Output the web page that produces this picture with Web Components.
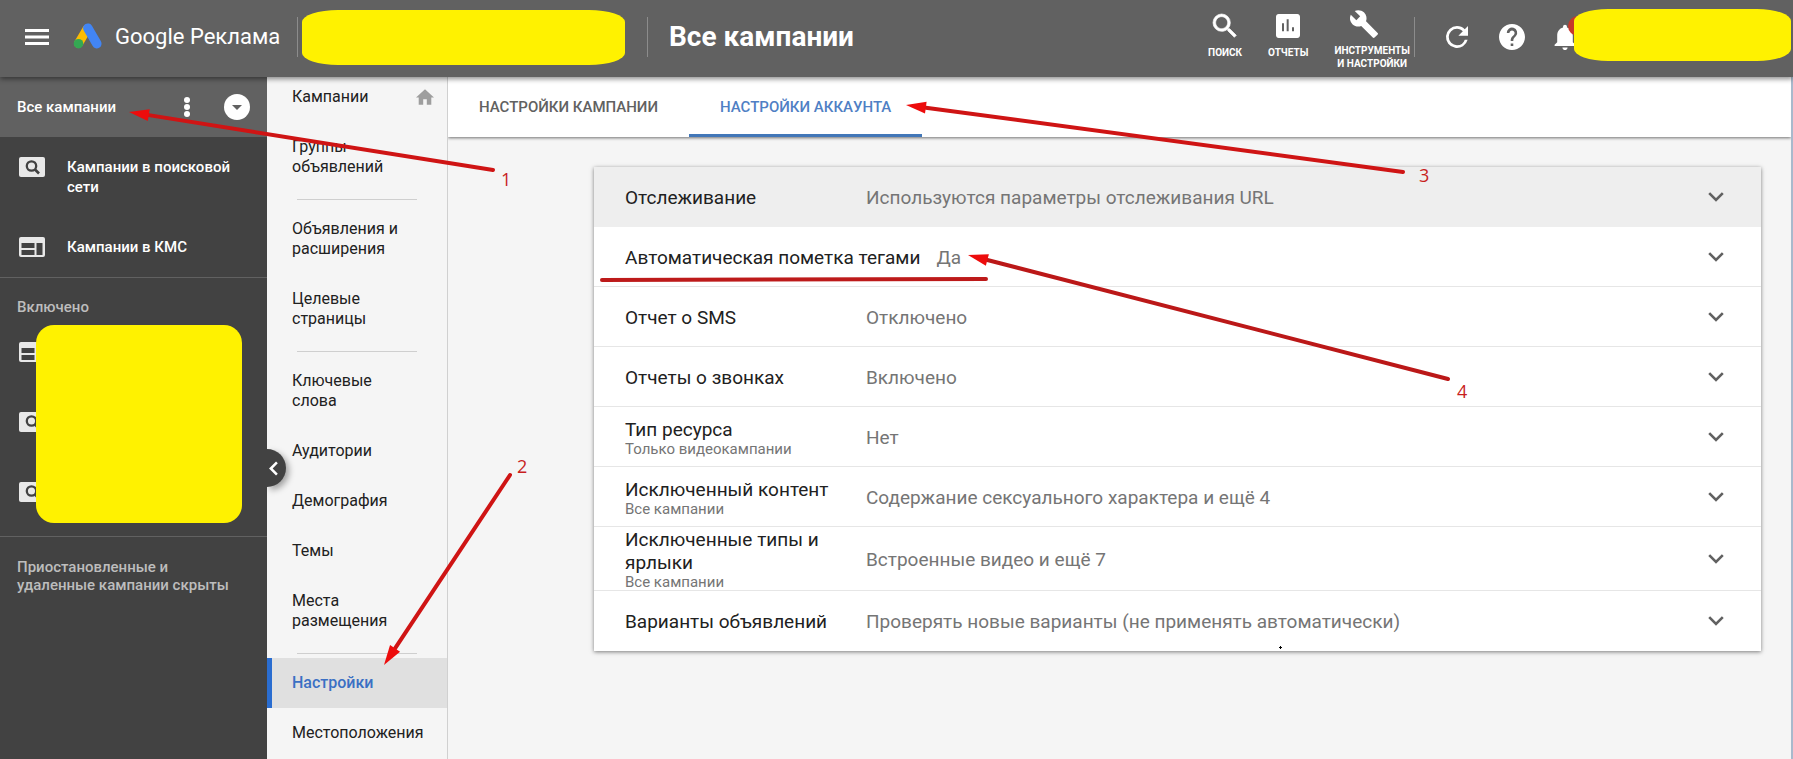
<!DOCTYPE html>
<html lang="ru">
<head>
<meta charset="utf-8">
<title>Все кампании – Google Реклама</title>
<style>
html, body { margin: 0; height: 100%; }
body { font-family: Roboto, "Noto Sans", sans-serif; background: #f5f5f5; overflow: hidden; }
</style>
</head>
<body>
<ads-app></ads-app>
<script>
const ICONS = {
  menu: '<svg viewBox="0 0 24 16"><path fill="currentColor" d="M0 0h24v3H0zM0 6.500h24v3H0zM0 13h24v3H0z"/></svg>',
  logo: '<svg viewBox="0 0 30 26"><path d="M5.500 20.500 14 6" stroke="#fbbc04" stroke-width="9" stroke-linecap="round"/><path d="m14.800 5.200 9 15.500" stroke="#4285f4" stroke-width="9.500" stroke-linecap="round"/><circle cx="5.500" cy="20.700" r="4.800" fill="#34a853"/></svg>',
  search: '<svg viewBox="3 3 18 18"><path fill="currentColor" stroke="currentColor" stroke-width=".5" d="M15.500 14h-.79l-.28-.27A6.470 6.470 0 0 0 16 9.500 6.500 6.500 0 1 0 9.500 16c1.610 0 3.090-.59 4.230-1.570l.27.28v.79l5 4.990L20.490 19l-4.990-5zm-6 0C7.010 14 5 11.990 5 9.500S7.010 5 9.500 5 14 7.010 14 9.500 11.990 14 9.500 14z"/></svg>',
  reports: '<svg viewBox="3 3 18 18"><path fill="currentColor" d="M19 3H5c-1.100 0-2 .9-2 2v14c0 1.100.9 2 2 2h14c1.100 0 2-.9 2-2V5c0-1.100-.9-2-2-2zM9 16H7.500v-6H9zm3.500 0H11V7h1.500zm4 0H15v-3h1.500z"/></svg>',
  wrench: '<svg viewBox="1 1 22 22"><path fill="currentColor" d="m22.700 19-9.100-9.100c.9-2.300.4-5-1.500-6.900-2-2-5-2.400-7.400-1.300L9 6 6 9 1.600 4.700C.4 7.100.9 10.100 2.900 12.100c1.900 1.900 4.600 2.400 6.900 1.500l9.100 9.100c.4.4 1 .4 1.400 0l2.300-2.300c.5-.4.5-1.100.1-1.400z"/></svg>',
  refresh: '<svg viewBox="4 4 16 16"><path fill="currentColor" d="M17.650 6.350A7.958 7.958 0 0 0 12 4a8 8 0 1 0 7.730 10h-2.080A5.990 5.990 0 0 1 12 18a6 6 0 1 1 0-12c1.660 0 3.140.69 4.220 1.780L13 11h7V4l-2.350 2.350z"/></svg>',
  help: '<svg viewBox="2 2 20 20"><path fill="currentColor" d="M12 2C6.480 2 2 6.480 2 12s4.480 10 10 10 10-4.480 10-10S17.520 2 12 2zm1 17h-2v-2h2v2zm2.070-7.750-.9.920C13.450 12.900 13 13.500 13 15h-2v-.5c0-1.100.45-2.100 1.170-2.830l1.240-1.260A2 2 0 1 0 10 9H8a4 4 0 1 1 7.070 2.250z"/></svg>',
  bell: '<svg viewBox="4 2 16 20"><path fill="currentColor" d="M12 22c1.100 0 2-.9 2-2h-4c0 1.100.9 2 2 2zm6-6v-5c0-3.070-1.640-5.640-4.500-6.320V4a1.500 1.500 0 0 0-3 0v.68C7.630 5.360 6 7.920 6 11v5l-2 2v1h16v-1l-2-2z"/></svg>',
  home: '<svg viewBox="2 3 20 17"><path fill="currentColor" d="M10 20v-6h4v6h5v-8h3L12 3 2 12h3v8z"/></svg>',
  dots: '<svg viewBox="0 0 6 20"><g fill="currentColor"><circle cx="3" cy="3" r="3"/><circle cx="3" cy="10" r="3"/><circle cx="3" cy="17" r="3"/></g></svg>',
  caret: '<svg viewBox="0 0 10 5"><path fill="currentColor" d="M0 0h10L5 5z"/></svg>',
  chevron: '<svg viewBox="0 0 16 10"><path fill="none" stroke="currentColor" stroke-width="2.600" d="m1.200 1.200 6.800 6.800 6.800-6.800"/></svg>',
  left: '<svg viewBox="0 0 10 16"><path fill="none" stroke="currentColor" stroke-width="2.800" d="m8.800 1.200-6.800 6.800 6.800 6.800"/></svg>',
  searchCard: '<svg viewBox="0 0 26 20"><rect width="26" height="20" rx="2" fill="#e8e8e8"/><circle cx="12.500" cy="9" r="4.700" fill="none" stroke="#424242" stroke-width="2.300"/><path d="m16 12.500 4 4" stroke="#424242" stroke-width="2.600"/></svg>',
  displayCard: '<svg viewBox="0 0 26 20"><rect width="26" height="20" rx="2" fill="#e8e8e8"/><path fill="#424242" d="M2.500 6h13v5h-13zM2.500 13h13v5h-13zM17.500 6h6v12h-6z"/></svg>'
};

class Base extends HTMLElement {
  constructor() { super(); this.attachShadow({ mode: 'open' }); }
  connectedCallback() { this.shadowRoot.innerHTML = this.render(); }
  a(name) { return this.getAttribute(name) || ''; }
}
const RESET = `*{box-sizing:border-box}
button{all:unset;box-sizing:border-box;cursor:pointer}
a{color:inherit;text-decoration:none}`;

customElements.define('ads-icon', class extends Base {
  render() { return `<style>:host{display:block;flex:none}svg{display:block;width:100%;height:100%;overflow:visible}</style>${ICONS[this.a('name')]}`; }
});

customElements.define('tool-button', class extends Base {
  render() { return `<style>${RESET}
:host{display:block;flex:none}
button{display:flex;flex-direction:column;align-items:center;gap:8px;text-align:center;font-size:10px;line-height:13px;font-weight:700;text-transform:uppercase;white-space:nowrap}
ads-icon{width:24px;height:24px}
:host([name=wrench]) ads-icon{width:28px;height:28px;margin-right:16px}
:host([name=wrench]) button{gap:6px}
</style><button><ads-icon name="${this.a('name')}"></ads-icon><span><slot></slot></span></button>`; }
});

customElements.define('redacted-block', class extends Base {
  render() { return `<style>:host{display:block;background:#fff200}</style>`; }
});

customElements.define('app-header', class extends Base {
  render() { return `<style>${RESET}
:host{display:flex;align-items:flex-start;height:77px;background:#616161;color:#fff;position:relative;z-index:2;box-shadow:0 2px 5px rgba(0,0,0,.45);padding-left:25px}
.menu{margin-top:29px}.menu ads-icon{width:24px;height:16px}
.brand{display:flex;gap:12px;margin:20px 0 0 24px;width:224px}
.brand ads-icon{width:30px;height:26px;margin-top:3px}
.brand span{font-size:22px;line-height:34px;white-space:nowrap}
i{flex:none;width:1px;height:40px;margin-top:17px;background:#8c8c8c}
.account{width:323px;height:55px;margin:10px 22px 0 4px;border-radius:36px / 12px}
h1{margin:18px auto 0 21px;font-size:28px;line-height:38px;font-weight:700;white-space:nowrap}
.tools{display:flex;gap:26px;padding-right:4px}
.tools tool-button{margin-top:14px}
.tools tool-button[name=wrench]{margin-top:10px}
.actions{display:flex;align-items:center;gap:31px;margin:22px 0 0 31px;height:30px}
.r{width:22px;height:22px}.h{width:26px;height:26px}.b{width:22px;height:26px;margin-right:-2px}
.bell{position:relative;margin-left:-2px}
.bell::after{content:"";position:absolute;left:14px;top:-8px;width:20px;height:20px;border-radius:50%;background:#c5392b}
.profile{position:relative;width:217px;height:52px;margin:9px 2px 0 0;border-radius:34px / 12px}
</style>
<button class="menu" aria-label="Меню"><ads-icon name="menu"></ads-icon></button>
<a class="brand" href="#"><ads-icon name="logo"></ads-icon><span>Google Реклама</span></a><i></i>
<redacted-block class="account"></redacted-block><i></i>
<h1>Все кампании</h1>
<div class="tools"><tool-button name="search">Поиск</tool-button><tool-button name="reports">Отчеты</tool-button><tool-button name="wrench">Инструменты<br>и настройки</tool-button></div><i></i>
<div class="actions"><button aria-label="Обновить"><ads-icon class="r" name="refresh"></ads-icon></button><button aria-label="Справка"><ads-icon class="h" name="help"></ads-icon></button><button class="bell" aria-label="Уведомления"><ads-icon class="b" name="bell"></ads-icon></button></div>
<redacted-block class="profile"></redacted-block>`; }
});

customElements.define('campaign-item', class extends Base {
  render() { return `<style>${RESET}
:host{display:block}
a{display:flex;gap:22px;padding:20px 20px 20px 19px;min-height:60px;font-size:15px;line-height:20px;font-weight:500;color:#fff}
ads-icon{width:26px;height:20px}
</style><a href="#"><ads-icon name="${this.a('icon')}"></ads-icon><span><slot></slot></span></a>`; }
});

customElements.define('campaign-sidebar', class extends Base {
  render() { return `<style>${RESET}
:host{display:block;width:267px;flex:none;background:#424242;color:#fff;font-size:15px;font-weight:500}
.all{display:flex;align-items:center;height:60px;background:#616161;padding:0 17px}
.all a{flex:1}
.all ads-icon{width:6px;height:20px;margin-right:34px}
.round{display:grid;place-items:center;width:26px;height:26px;border-radius:50%;background:#fff;color:#616161}
.round ads-icon{width:10px;height:5px;margin:0}
.group{border-bottom:1px solid #616161}
campaign-item.two{height:80px}
h2{margin:0;padding:19px 17px 5px;font-size:15px;line-height:20px;font-weight:500;color:#bdbdbd}
.hidden-list{position:relative;height:214px}
.hidden-list campaign-item{height:70px}
redacted-block{position:absolute;left:36px;top:3px;width:206px;height:198px;border-radius:18px}
p{margin:0;padding:21px 36px 21px 17px;line-height:18px;color:#bdbdbd}
</style>
<div class="all"><a href="#">Все кампании</a><button aria-label="Ещё"><ads-icon name="dots"></ads-icon></button><button class="round" aria-label="Развернуть"><ads-icon name="caret"></ads-icon></button></div>
<div class="group"><campaign-item class="two" icon="searchCard">Кампании в поисковой сети</campaign-item><campaign-item icon="displayCard">Кампании в КМС</campaign-item></div>
<div class="group"><h2>Включено</h2><div class="hidden-list"><campaign-item icon="displayCard"></campaign-item><campaign-item icon="searchCard"></campaign-item><campaign-item icon="searchCard"></campaign-item><redacted-block></redacted-block></div></div>
<p>Приостановленные и<br>удаленные кампании скрыты</p>`; }
});

customElements.define('nav-item', class extends Base {
  render() { return `<style>${RESET}
:host{display:block}
a{display:flex;justify-content:space-between;align-items:center;padding:15px 13px 15px 25px;font-size:16px;line-height:20px;color:#212121}
:host([active]) a{background:#e0e0e0;border-left:5px solid #2a6dd0;padding-left:20px;color:#3b70c4;font-weight:500}
</style><a href="#"><span><slot></slot></span><slot name="icon"></slot></a>`; }
});

customElements.define('section-nav', class extends Base {
  render() { return `<style>${RESET}
:host{display:block;position:relative;width:181px;flex:none;background:#f5f5f5;border-right:1px solid #d0d0d0;box-sizing:border-box}
nav{margin-top:-5px}
hr{margin:0 30px;height:12px;border:0;background:linear-gradient(#cfcfcf,#cfcfcf) 0 7px / 100% 1px no-repeat}
nav ads-icon{width:18px;height:16px;color:#9e9e9e}
.collapse{position:absolute;left:0;top:372px;display:grid;place-items:center;width:19px;height:38px;border-radius:0 19px 19px 0;background:#424242;color:#fff;box-shadow:3px 3px 6px rgba(0,0,0,.35);clip-path:inset(-10px -10px -10px 0)}
.collapse ads-icon{width:9px;height:15px;margin-right:7px}
</style>
<nav><nav-item>Кампании<ads-icon slot="icon" name="home"></ads-icon></nav-item><nav-item>Группы<br>объявлений</nav-item><hr>
<nav-item>Объявления и<br>расширения</nav-item><nav-item>Целевые<br>страницы</nav-item><hr>
<nav-item>Ключевые<br>слова</nav-item><nav-item>Аудитории</nav-item><nav-item>Демография</nav-item><nav-item>Темы</nav-item><nav-item>Места<br>размещения</nav-item><hr>
<nav-item active>Настройки</nav-item><nav-item>Местоположения</nav-item></nav>
<button class="collapse" aria-label="Свернуть"><ads-icon name="left"></ads-icon></button>`; }
});

customElements.define('settings-tabs', class extends Base {
  render() { return `<style>${RESET}
:host{display:flex;height:60px;background:#fff;box-shadow:0 1px 3px rgba(0,0,0,.55);position:relative}
a{display:flex;align-items:center;padding:0 31px;font-size:15px;font-weight:500;color:#616161;border-bottom:3px solid transparent;border-top:3px solid transparent;text-transform:uppercase;white-space:nowrap}
a.on{color:#4f7fc4;border-bottom-color:#4277b8}
</style><a href="#">Настройки кампании</a><a href="#" class="on">Настройки аккаунта</a>`; }
});

customElements.define('setting-row', class extends Base {
  render() { return `<style>${RESET}
:host{display:block;border-bottom:1px solid #e6e6e6}
:host(:last-child){border-bottom:0}
:host([shaded]){background:#eee;border-color:#eee}
button{display:flex;align-items:center;width:100%;min-height:59px;padding:0 37px 0 31px}
:host(:last-child) button{min-height:60px}
.t,.v{padding-top:1px;font-size:19px;line-height:23px}
.t{flex:none;min-width:225px;margin-right:16px;color:#212121;white-space:nowrap}
small{display:block;font-size:15px;line-height:16px;color:#757575}
.v{flex:1;color:#757575}
ads-icon{width:16px;height:10px;color:#616161}
</style><button aria-expanded="false"><span class="t"><slot></slot>${this.a('sub') ? `<small>${this.a('sub')}</small>` : ''}</span><span class="v">${this.a('value')}</span><ads-icon name="chevron"></ads-icon></button>`; }
});

customElements.define('settings-card', class extends Base {
  render() { return `<style>:host{display:block;background:#fff;box-shadow:0 1px 4px rgba(0,0,0,.5)}</style><slot></slot>`; }
});

customElements.define('tutorial-marks', class extends Base {
  arrow(x1, y1, x2, y2, color) {
    const d = Math.hypot(x2 - x1, y2 - y1), ux = (x2 - x1) / d, uy = (y2 - y1) / d, L = 20, W = 6;
    const bx = x2 - ux * L, by = y2 - uy * L;
    return `<path d="M${x1} ${y1}L${bx} ${by}" stroke="${color}" stroke-width="4" stroke-linecap="round"/><path fill="#ed0c0c" d="M${x2} ${y2}L${bx - uy * W} ${by + ux * W}L${bx + uy * W} ${by - ux * W}z"/>`;
  }
  render() { return `<style>
:host{position:absolute;left:0;top:0;z-index:5;pointer-events:none}
svg{display:block;overflow:visible}
text{font:18px "Open Sans","Noto Sans",sans-serif;fill:#c81e1e}
</style><svg width="1" height="1">
${this.arrow(493, 170, 129, 112, '#cf1414')}${this.arrow(510, 475, 384, 665, '#cf1414')}${this.arrow(1403, 172, 906, 105, '#cf1414')}${this.arrow(1448, 379, 968, 255, '#bb1818')}
<path d="M602 280 986 279" stroke="#bd1a1a" stroke-width="4" stroke-linecap="round"/>
<path d="M1279 647.500h3M1280.500 646v3" stroke="#000"/>
<text x="501" y="186">1</text><text x="517" y="473">2</text><text x="1419" y="182">3</text><text x="1457" y="398">4</text></svg>`; }
});

customElements.define('ads-app', class extends Base {
  render() { return `<style>
:host{display:flex;flex-direction:column;height:100%;position:relative}
.body{display:flex;flex:1;min-height:0}
main{flex:1;min-width:0;border-right:2px solid #a9b9cc;overflow:hidden}
settings-card{margin:30px 30px 0 146px}
</style>
<app-header></app-header>
<div class="body"><campaign-sidebar></campaign-sidebar><section-nav></section-nav>
<main><settings-tabs></settings-tabs>
<settings-card>
<setting-row shaded value="Используются параметры отслеживания URL">Отслеживание</setting-row>
<setting-row value="Да">Автоматическая пометка тегами</setting-row>
<setting-row value="Отключено">Отчет о SMS</setting-row>
<setting-row value="Включено">Отчеты о звонках</setting-row>
<setting-row value="Нет" sub="Только видеокампании">Тип ресурса</setting-row>
<setting-row value="Содержание сексуального характера и ещё 4" sub="Все кампании">Исключенный контент</setting-row>
<setting-row value="Встроенные видео и ещё 7" sub="Все кампании">Исключенные типы и<br>ярлыки</setting-row>
<setting-row value="Проверять новые варианты (не применять автоматически)">Варианты объявлений</setting-row>
</settings-card></main></div>
<tutorial-marks></tutorial-marks>`; }
});
</script>
</body>
</html>
